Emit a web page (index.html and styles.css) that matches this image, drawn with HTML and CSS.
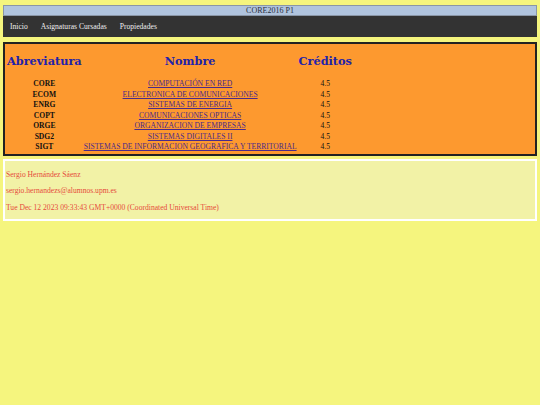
FILE: index.html
```html
<!DOCTYPE html>
<html lang="es">
<head>
<meta charset="utf-8">
<title>CORE2016 P1</title>
<link rel="stylesheet" href="styles.css">
</head>
<body>
<header class="titlebar">CORE2016 P1</header>
<nav class="nav">
  <a href="#">Inicio</a>
  <a href="#">Asignaturas Cursadas</a>
  <a href="#">Propiedades</a>
</nav>
<main class="main">
  <table class="subjects">
    <thead>
      <tr><th>Abreviatura</th><th>Nombre</th><th>Créditos</th></tr>
    </thead>
    <tbody>
      <tr><td class="abbr">CORE</td><td><a href="#">COMPUTACIÓN EN RED</a></td><td>4.5</td></tr>
      <tr><td class="abbr">ECOM</td><td><a href="#">ELECTRONICA DE COMUNICACIONES</a></td><td>4.5</td></tr>
      <tr><td class="abbr">ENRG</td><td><a href="#">SISTEMAS DE ENERGIA</a></td><td>4.5</td></tr>
      <tr><td class="abbr">COPT</td><td><a href="#">COMUNICACIONES OPTICAS</a></td><td>4.5</td></tr>
      <tr><td class="abbr">ORGE</td><td><a href="#">ORGANIZACION DE EMPRESAS</a></td><td>4.5</td></tr>
      <tr><td class="abbr">SDG2</td><td><a href="#">SISTEMAS DIGITALES II</a></td><td>4.5</td></tr>
      <tr><td class="abbr">SIGT</td><td><a href="#">SISTEMAS DE INFORMACION GEOGRAFICA Y TERRITORIAL</a></td><td>4.5</td></tr>
    </tbody>
  </table>
</main>
<footer class="info">
  <p>Sergio Hernández Sáenz</p>
  <p>sergio.hernandezs@alumnos.upm.es</p>
  <p>Tue Dec 12 2023 09:33:43 GMT+0000 (Coordinated Universal Time)</p>
</footer>
</body>
</html>
```
FILE: styles.css
```css
html, body {
  margin: 0;
  padding: 0;
}
body {
  background: #f5f57e;
  font-family: "Liberation Serif", serif;
  font-size: 7.6px;
  padding: 5px 3px 0 3px;
}
.titlebar {
  background: #b0c4de;
  border: 1px solid #8a96a6;
  color: #2a3040;
  text-align: center;
  font-size: 8px;
  line-height: 9px;
}
.nav {
  background: #333333;
  height: 21px;
  display: flex;
  align-items: center;
  gap: 13px;
  padding: 0 7px;
}
.nav a {
  color: #eeeeee;
  text-decoration: none;
  font-size: 7.6px;
}
.main {
  margin-top: 5px;
  background: #fd992f;
  border: 2px solid #222;
  padding: 2px 1px 2px 1px;
}
.subjects {
  border-collapse: collapse;
}
.subjects th {
  font-family: "DejaVu Serif", serif;
  font-weight: bold;
  font-size: 11.3px;
  color: #2222aa;
  padding: 8px 1px 10px 1px;
  text-align: center;
}
.subjects td {
  text-align: center;
  font-size: 7.6px;
  line-height: 9px;
  padding: 1px 1px 0.5px 1px;
  color: #111;
}
.subjects td.abbr {
  font-weight: bold;
}
.subjects a {
  color: #4b2a8a;
}
.info {
  margin-top: 3px;
  background: #f2f2a6;
  border: 2px solid #ffffff;
  padding: 0 1px;
  color: #e64a3c;
}
.info p {
  margin: 7.5px 0;
  line-height: 9px;
}
.info p:first-child {
  margin-top: 9px;
}
```
